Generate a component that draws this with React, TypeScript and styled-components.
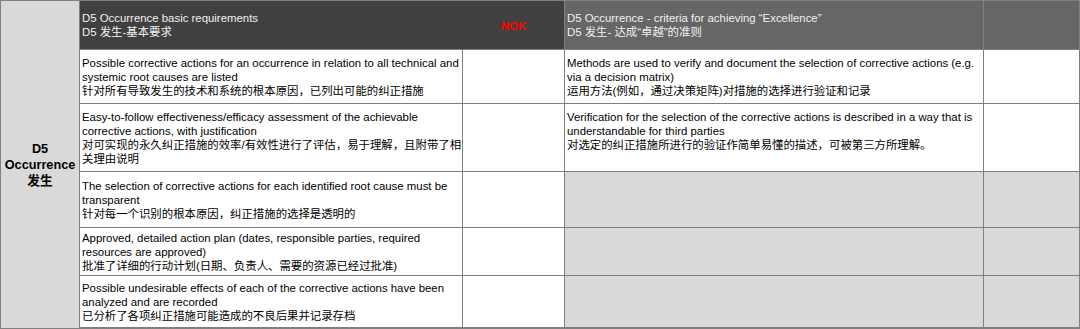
import React from "react";
import styled, { createGlobalStyle } from "styled-components";

const GlobalStyle = createGlobalStyle`
  html, body {
    margin: 0;
    padding: 0;
    background: #ffffff;
  }
  body {
    font-family: "Liberation Sans", Arial, "Noto Sans CJK SC", sans-serif;
    color: #000000;
  }
`;

const LINE = "#7f7f7f";

const Table = styled.div`
  display: grid;
  grid-template-columns: 79px 383px 102px 419px 96px;
  grid-template-rows: 49px 54px 68px 56px 48px 52px;
  width: 1080px;
  box-sizing: border-box;
  border-top: 1px solid ${LINE};
  border-left: 1px solid ${LINE};
  border-bottom: 1px solid ${LINE};
`;

const Label = styled.div`
  grid-row: 1 / span 6;
  grid-column: 1;
  background: #d9d9d9;
  border-right: 1px solid ${LINE};
  display: flex;
  flex-direction: column;
  align-items: center;
  justify-content: center;
  font-size: 12.7px;
  line-height: 16px;
  font-weight: bold;
  text-align: center;
`;

const Cell = styled.div<{ $bg?: string; $dark?: boolean; $noRight?: boolean; $center?: boolean }>`
  box-sizing: border-box;
  background: ${(p) => p.$bg || "#ffffff"};
  color: ${(p) => (p.$dark ? "#f0f0f0" : "#000000")};
  border-right: 1px solid ${(p) => (p.$noRight ? p.$bg : LINE)};
  border-bottom: 1px solid ${LINE};
  display: flex;
  flex-direction: column;
  justify-content: center;
  align-items: ${(p) => (p.$center ? "center" : "flex-start")};
  padding: 0 2px;
  font-size: 11.4px;
  line-height: 14px;
  white-space: nowrap;
  overflow: hidden;
`;

const Nok = styled.span`
  color: #ff0000;
  font-weight: bold;
  padding-top: 2px;
`;

const Line = styled.span`
  display: block;
  min-height: 14px;
`;

type Row = { basic: string[]; criteria?: string[] };

const rows: Row[] = [
  {
    basic: [
      "Possible corrective actions for an occurrence in relation to all technical and",
      "systemic root causes are listed",
      "针对所有导致发生的技术和系统的根本原因，已列出可能的纠正措施",
    ],
    criteria: [
      "Methods are used to verify and document the selection of corrective actions (e.g.",
      "via a decision matrix)",
      "运用方法(例如，通过决策矩阵)对措施的选择进行验证和记录",
    ],
  },
  {
    basic: [
      "Easy-to-follow effectiveness/efficacy assessment of the achievable",
      "corrective actions, with justification",
      "对可实现的永久纠正措施的效率/有效性进行了评估，易于理解，且附带了相",
      "关理由说明",
    ],
    criteria: [
      "Verification for the selection of the corrective actions is described in a way that is",
      "understandable for third parties",
      "对选定的纠正措施所进行的验证作简单易懂的描述，可被第三方所理解。",
      "",
    ],
  },
  {
    basic: [
      "The selection of corrective actions for each identified root cause must be",
      "transparent",
      "针对每一个识别的根本原因，纠正措施的选择是透明的",
    ],
  },
  {
    basic: [
      "Approved, detailed action plan (dates, responsible parties, required",
      "resources are approved)",
      "批准了详细的行动计划(日期、负责人、需要的资源已经过批准)",
    ],
  },
  {
    basic: [
      "Possible undesirable effects of each of the corrective actions have been",
      "analyzed and are recorded",
      "已分析了各项纠正措施可能造成的不良后果并记录存档",
    ],
  },
];

const Lines = ({ lines }: { lines: string[] }) => (
  <>
    {lines.map((l, i) => (
      <Line key={i}>{l}</Line>
    ))}
  </>
);

const App = () => {
  return (
    <>
      <GlobalStyle />
      <Table>
        <Label>
          <span>D5</span>
          <span>Occurrence</span>
          <span>发生</span>
        </Label>

        <Cell $bg="#404040" $dark $noRight>
          <Lines lines={["D5 Occurrence basic requirements", "D5 发生-基本要求"]} />
        </Cell>
        <Cell $bg="#404040" $dark $center>
          <Nok>NOK</Nok>
        </Cell>
        <Cell $bg="#666666" $dark>
          <Lines lines={["D5 Occurrence - criteria for achieving “Excellence”", "D5 发生- 达成“卓越”的准则"]} />
        </Cell>
        <Cell $bg="#666666" $dark />

        {rows.map((r, i) => (
          <React.Fragment key={i}>
            <Cell>
              <Lines lines={r.basic} />
            </Cell>
            <Cell />
            <Cell $bg={r.criteria ? "#ffffff" : "#d9d9d9"}>
              {r.criteria && <Lines lines={r.criteria} />}
            </Cell>
            <Cell $bg={r.criteria ? "#ffffff" : "#d9d9d9"} />
          </React.Fragment>
        ))}
      </Table>
    </>
  );
};

export default App;
